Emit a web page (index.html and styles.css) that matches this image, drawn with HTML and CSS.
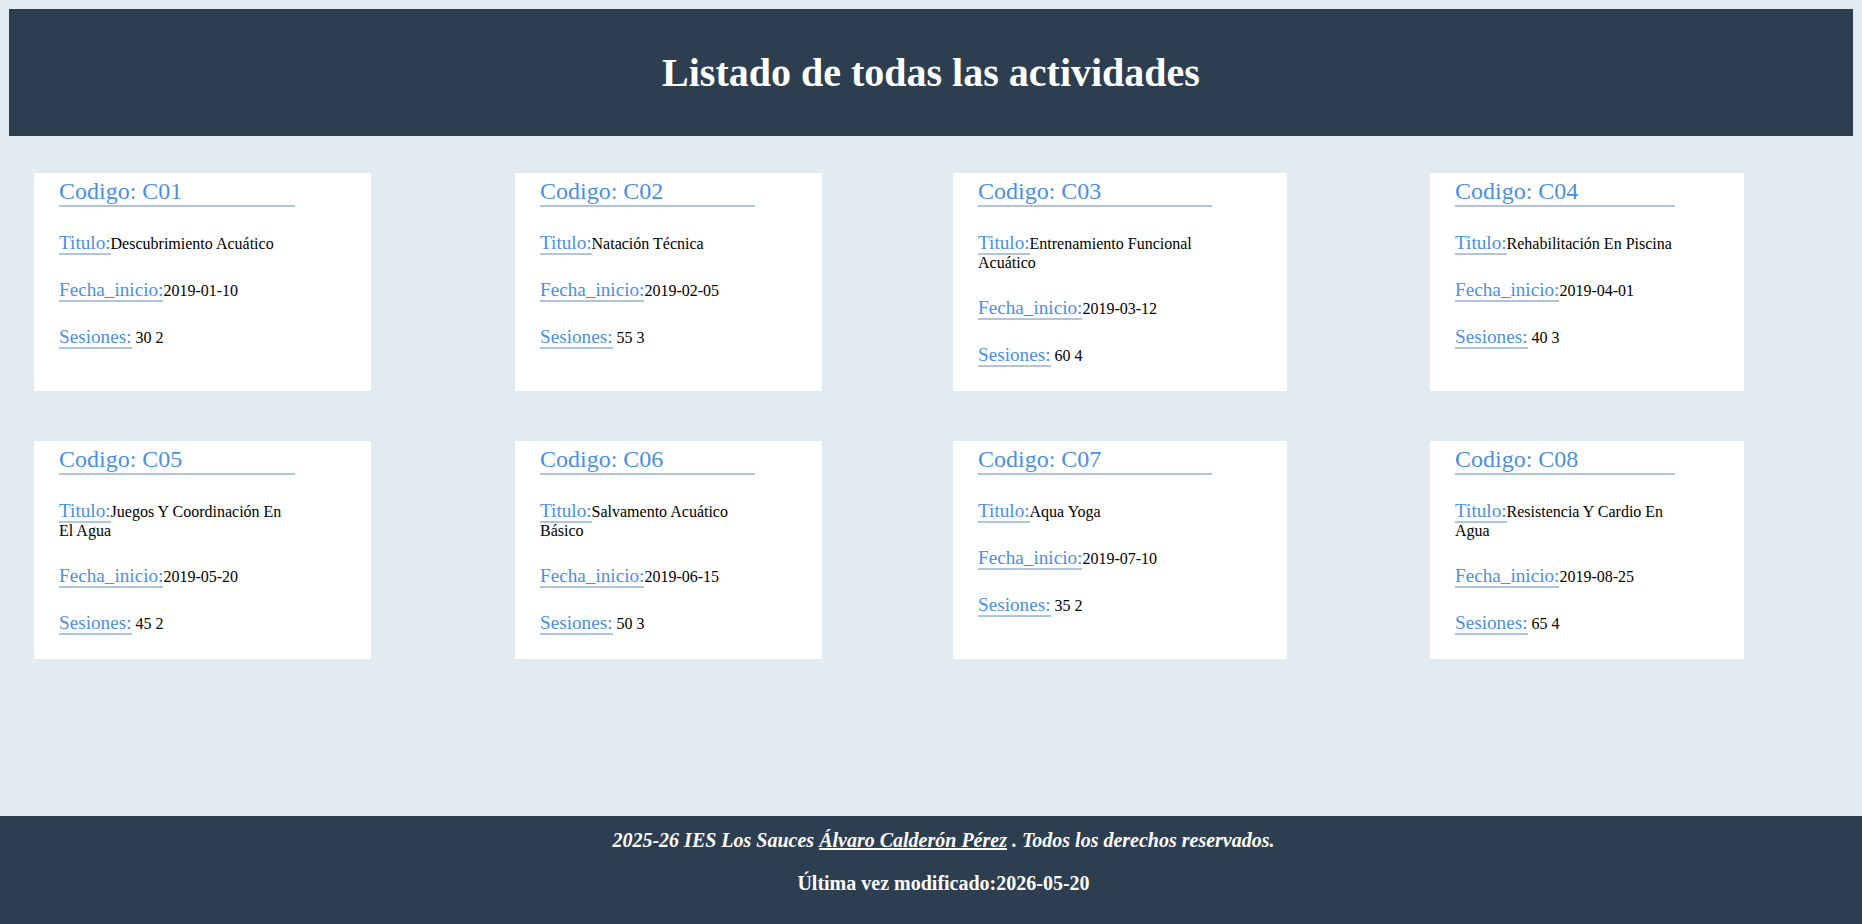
FILE: index.html
```html
<!DOCTYPE html>
<html lang="es">
<head>
    <meta charset="UTF-8">
    <meta name="viewport" content="width=device-width, initial-scale=1.0">
    <title>Actividades</title>
    <link rel="stylesheet" href="styles.css">
</head>
<body>

    <header class="cabecera">
        <h1>Listado de todas las actividades</h1>
    </header>

    <main class="contenido">
        <div class="actividades">

            <article class="tarjeta">
                <h2>Codigo: C01</h2>
                <p><span class="etiqueta">Titulo:</span>Descubrimiento Acuático</p>
                <p><span class="etiqueta">Fecha_inicio:</span>2019-01-10</p>
                <p><span class="etiqueta">Sesiones:</span> 30 2</p>
            </article>

            <article class="tarjeta">
                <h2>Codigo: C02</h2>
                <p><span class="etiqueta">Titulo:</span>Natación Técnica</p>
                <p><span class="etiqueta">Fecha_inicio:</span>2019-02-05</p>
                <p><span class="etiqueta">Sesiones:</span> 55 3</p>
            </article>

            <article class="tarjeta">
                <h2>Codigo: C03</h2>
                <p><span class="etiqueta">Titulo:</span>Entrenamiento Funcional Acuático</p>
                <p><span class="etiqueta">Fecha_inicio:</span>2019-03-12</p>
                <p><span class="etiqueta">Sesiones:</span> 60 4</p>
            </article>

            <article class="tarjeta">
                <h2>Codigo: C04</h2>
                <p><span class="etiqueta">Titulo:</span>Rehabilitación En Piscina</p>
                <p><span class="etiqueta">Fecha_inicio:</span>2019-04-01</p>
                <p><span class="etiqueta">Sesiones:</span> 40 3</p>
            </article>

            <article class="tarjeta">
                <h2>Codigo: C05</h2>
                <p><span class="etiqueta">Titulo:</span>Juegos Y Coordinación En El Agua</p>
                <p><span class="etiqueta">Fecha_inicio:</span>2019-05-20</p>
                <p><span class="etiqueta">Sesiones:</span> 45 2</p>
            </article>

            <article class="tarjeta">
                <h2>Codigo: C06</h2>
                <p><span class="etiqueta">Titulo:</span>Salvamento Acuático Básico</p>
                <p><span class="etiqueta">Fecha_inicio:</span>2019-06-15</p>
                <p><span class="etiqueta">Sesiones:</span> 50 3</p>
            </article>

            <article class="tarjeta">
                <h2>Codigo: C07</h2>
                <p><span class="etiqueta">Titulo:</span>Aqua Yoga</p>
                <p><span class="etiqueta">Fecha_inicio:</span>2019-07-10</p>
                <p><span class="etiqueta">Sesiones:</span> 35 2</p>
            </article>

            <article class="tarjeta">
                <h2>Codigo: C08</h2>
                <p><span class="etiqueta">Titulo:</span>Resistencia Y Cardio En Agua</p>
                <p><span class="etiqueta">Fecha_inicio:</span>2019-08-25</p>
                <p><span class="etiqueta">Sesiones:</span> 65 4</p>
            </article>

        </div>
    </main>

    <footer class="pie">
        <p><em>2025-26 IES Los Sauces <a href="#">Álvaro Calderón Pérez</a> . Todos los derechos reservados.</em></p>
        <p>Última vez modificado:2026-05-20</p>
    </footer>

</body>
</html>
```

FILE: styles.css
```css
body {
    margin: 0;
    min-height: 100vh;
    display: flex;
    flex-direction: column;
    background: #e2eaf2;
    font-family: "Liberation Serif", "Times New Roman", serif;
    font-size: 16px;
}

/* cabecera */
.cabecera {
    margin: 9px;
    padding: 20px;
    background-color: #2c3e50;
    color: white;
    text-align: center;
}

.cabecera h1 {
    margin: 20px 0;
    font-size: 40px;
}

/* listado de tarjetas */
.contenido {
    flex: 1;
    padding: 28px 0 0 34px;
}

.actividades {
    display: grid;
    grid-template-columns: 481px 438px 477px 432px;
    row-gap: 50px;
}

.tarjeta {
    width: 70%;
    background: white;
}

.tarjeta:nth-child(4n) {
    width: 72.7%;
}

.tarjeta h2 {
    width: 70%;
    margin: 5px 0 0 25px;
    font-size: 24px;
    font-weight: normal;
    color: #4a90e2;
    border-bottom: 2px solid #b0c4de;
}

.tarjeta p {
    width: 70%;
    margin: 25px 0 25px 25px;
}

.etiqueta {
    font-size: 1.2em;
    color: #4a90e2;
    border-bottom: 2px solid #b0c4de;
}

/* pie de pagina */
.pie {
    padding: 13px 0 9px 25px;
    background-color: #2c3e50;
    color: white;
    text-align: center;
    font-size: 20px;
    font-weight: bold;
}

.pie p {
    margin: 0 0 20px;
}

.pie a {
    color: white;
}
```
